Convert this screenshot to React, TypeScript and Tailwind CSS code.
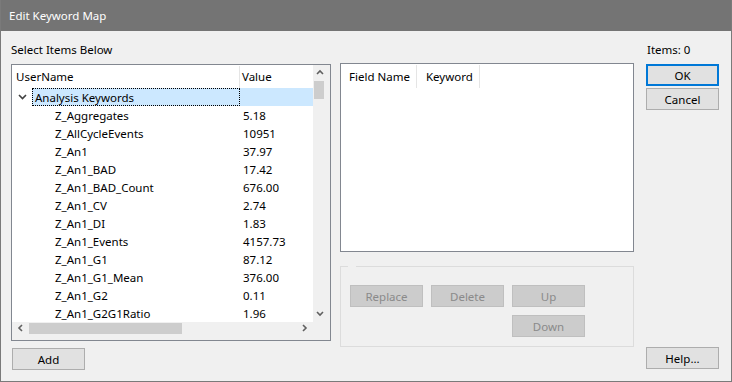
import React from "react";

const rows: [string, string][] = [
  ["Z_Aggregates", "5.18"],
  ["Z_AllCycleEvents", "10951"],
  ["Z_An1", "37.97"],
  ["Z_An1_BAD", "17.42"],
  ["Z_An1_BAD_Count", "676.00"],
  ["Z_An1_CV", "2.74"],
  ["Z_An1_DI", "1.83"],
  ["Z_An1_Events", "4157.73"],
  ["Z_An1_G1", "87.12"],
  ["Z_An1_G1_Mean", "376.00"],
  ["Z_An1_G2", "0.11"],
  ["Z_An1_G2G1Ratio", "1.96"],
];

function Chevron({ dir }: { dir: "up" | "down" | "left" | "right" }) {
  const d =
    dir === "up"
      ? "M1 5 L4 2 L7 5"
      : dir === "down"
      ? "M1 2 L4 5 L7 2"
      : dir === "left"
      ? "M5 1 L2 4 L5 7"
      : "M2 1 L5 4 L2 7";
  return (
    <svg width="8" height="8" viewBox="0 0 8 8">
      <path d={d} fill="none" stroke="#606060" strokeWidth="1.6" />
    </svg>
  );
}

function Btn({ label, w = "w-[73px]", def = false, disabled = false }: { label: string; w?: string; def?: boolean; disabled?: boolean }) {
  const cls = disabled
    ? "bg-[#cccccc] border border-[#bfbfbf] text-[#8a8a8a]"
    : def
    ? "bg-[#e1e1e1] border-2 border-[#0078d7] text-black"
    : "bg-[#e1e1e1] border border-[#adadad] text-black";
  return (
    <div className={`${w} h-[22px] flex items-center justify-center text-[11.5px] pt-px ${cls}`}>{label}</div>
  );
}

export default function App() {
  return (
    <div
      className="w-[732px] h-[382px] bg-[#f0f0f0] flex flex-col border-x border-b border-[#7a7a7a] overflow-hidden text-[11.5px]"
      style={{ fontFamily: '"Noto Sans", sans-serif' }}
    >
      {/* title bar */}
      <div className="h-[31px] shrink-0 bg-[#747474] flex items-center pl-[9px] pt-px text-white text-[11.5px] -mx-px">
        Edit Keyword Map
      </div>
      <div className="flex flex-row">
        {/* left column */}
        <div className="ml-[10px] w-[320px] flex flex-col">
          <div className="mt-[10px] h-[16px] leading-[16px] pt-px text-black">Select Items Below</div>
          <div className="mt-[7px] h-[277px] border border-[#828790] bg-white flex flex-col">
            <div className="flex flex-row h-[257px]">
              <div className="w-[301px] flex flex-col">
                <div className="h-[23px] flex flex-row text-black pt-px">
                  <div className="w-[228px] pl-[4px] flex items-center border-r border-[#e5e5e5]">UserName</div>
                  <div className="pl-[2px] flex items-center">Value</div>
                </div>
                <div className="h-[18px] flex flex-row items-center text-black">
                  <div className="w-[20px] pl-[6px] flex items-center">
                    <svg width="9" height="6" viewBox="0 0 9 6">
                      <path d="M1 1 L4.5 4.5 L8 1" fill="none" stroke="#404040" strokeWidth="1.6" />
                    </svg>
                  </div>
                  <div className="flex-1 h-[18px] bg-[#cce8ff] flex flex-row">
                    <div className="w-[208px] h-[18px] border border-dotted border-black pl-[2px] pt-px flex items-center">
                      Analysis Keywords
                    </div>
                  </div>
                </div>
                {rows.map(([n, v]) => (
                  <div key={n} className="h-[18px] flex flex-row items-center pt-px text-black">
                    <div className="w-[229px] pl-[43px]">{n}</div>
                    <div className="pl-[2px]">{v}</div>
                  </div>
                ))}
              </div>
              {/* vertical scrollbar */}
              <div className="w-[17px] bg-[#f0f0f0] flex flex-col">
                <div className="h-[16px] flex items-center justify-center pr-[4px]">
                  <Chevron dir="up" />
                </div>
                <div className="h-[18px] w-[10px] ml-[1px] bg-[#cdcdcd]" />
                <div className="flex-1" />
                <div className="h-[16px] flex items-center justify-center pr-[4px]">
                  <Chevron dir="down" />
                </div>
              </div>
            </div>
            {/* horizontal scrollbar */}
            <div className="flex-1 flex flex-row bg-[#f0f0f0]">
              <div className="w-[301px] flex flex-row items-start">
                <div className="w-[17px] h-[12px] flex items-center justify-center">
                  <Chevron dir="left" />
                </div>
                <div className="mt-[1px] w-[153px] h-[11px] bg-[#cdcdcd]" />
                <div className="flex-1" />
                <div className="w-[17px] h-[12px] flex items-center justify-center">
                  <Chevron dir="right" />
                </div>
              </div>
            </div>
          </div>
          <div className="mt-[7px] ml-[1px]">
            <Btn label="Add" />
          </div>
        </div>
        {/* middle column */}
        <div className="ml-[9px] w-[294px] flex flex-col">
          <div className="mt-[32px] h-[189px] border border-[#828790] bg-white">
            <div className="h-[24px] flex flex-row text-black pt-px">
              <div className="w-[76px] pl-[8px] flex items-center border-r border-[#e5e5e5]">Field Name</div>
              <div className="w-[63px] pl-[9px] flex items-center border-r border-[#e5e5e5]">Keyword</div>
            </div>
          </div>
          <div className="relative mt-[14px] h-[81px] border border-[#dcdcdc] pl-[9px] pt-[18px] flex flex-col gap-[8px]">
            <span className="absolute -top-px left-[7px] w-[8px] h-px bg-[#f0f0f0]" />
            <div className="flex flex-row gap-[8px]">
              <Btn label="Replace" disabled />
              <Btn label="Delete" disabled />
              <Btn label="Up" disabled />
            </div>
            <div className="flex flex-row gap-[8px] pl-[162px]">
              <Btn label="Down" disabled />
            </div>
          </div>
        </div>
        {/* right column */}
        <div className="ml-[12px] w-[73px] flex flex-col">
          <div className="mt-[10px] h-[16px] leading-[16px] pt-px text-black pl-[1px]">Items: 0</div>
          <div className="mt-[7px]">
            <Btn label="OK" def />
          </div>
          <div className="mt-[2px]">
            <Btn label="Cancel" />
          </div>
          <div className="mt-[237px]">
            <Btn label="Help..." />
          </div>
        </div>
      </div>
    </div>
  );
}
